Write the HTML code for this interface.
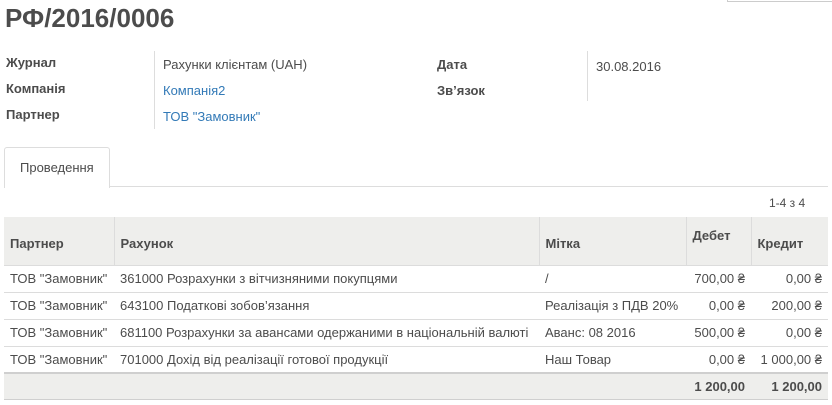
<!DOCTYPE html>
<html><head><meta charset="utf-8"><style>
*{margin:0;padding:0;box-sizing:border-box}
body{width:832px;height:405px;background:#fff;font-family:"Liberation Sans",sans-serif;font-size:13px;color:#4c4c4c;position:relative;overflow:hidden}
.a{position:absolute;white-space:nowrap}
.b{font-weight:bold;color:#4c4c4c}
.l{color:#337ab7}
table{position:absolute;left:4px;top:217px;width:824px;border-collapse:collapse}
td,th{padding:0 6px;white-space:nowrap}
th{background:#eeeeec;height:48px;text-align:left;font-weight:bold;border-left:1px solid #dcdcdc;border-bottom:1px solid #dcdcdc}
th:first-child{border-left:none}
td{height:27px;border-bottom:1px solid #dcdcdc}
.r{text-align:right}
tfoot td{background:#eeeeec;border-top:2px solid #cfcfcf;height:26px;font-weight:bold;border-bottom:1px solid #cfcfcf}
</style></head><body>
<div class="a" style="left:727px;top:-4px;width:106px;height:6px;border:1px solid #ccc"></div>
<div class="a" style="left:5px;top:3px;font-size:26px;font-weight:bold;color:#4c4c4c">РФ/2016/0006</div>
<div class="a b" style="left:6px;top:55px">Журнал</div>
<div class="a b" style="left:6px;top:81px">Компанія</div>
<div class="a b" style="left:6px;top:107px">Партнер</div>
<div class="a" style="left:154px;top:51px;width:1px;height:78px;background:#ddd"></div>
<div class="a" style="left:163px;top:57px">Рахунки клієнтам (UAH)</div>
<div class="a l" style="left:163px;top:83px">Компанія2</div>
<div class="a l" style="left:163px;top:109px">ТОВ "Замовник"</div>
<div class="a b" style="left:437px;top:57px">Дата</div>
<div class="a b" style="left:437px;top:83px">Зв’язок</div>
<div class="a" style="left:587px;top:51px;width:1px;height:50px;background:#ddd"></div>
<div class="a" style="left:596px;top:59px">30.08.2016</div>
<div class="a" style="left:4px;top:147px;width:106px;height:41px;border:1px solid #ddd;border-bottom:none;border-radius:3px 3px 0 0;background:#fff;z-index:2"></div>
<div class="a" style="left:20px;top:160px;z-index:3">Проведення</div>
<div class="a" style="left:4px;top:186px;width:824px;height:1px;background:#ddd"></div>
<div class="a" style="left:769px;top:196px;font-size:12px">1-4 з 4</div>
<table>
<thead><tr><th style="width:110px;padding-top:6px">Партнер</th><th style="width:425px;padding-top:6px">Рахунок</th><th style="width:147px;padding-top:6px">Мітка</th><th style="width:65px;vertical-align:top;padding-top:11px">Дебет</th><th style="padding-top:6px">Кредит</th></tr></thead>
<tbody>
<tr><td>ТОВ "Замовник"</td><td>361000 Розрахунки з вітчизняними покупцями</td><td>/</td><td class="r">700,00 ₴</td><td class="r">0,00 ₴</td></tr>
<tr><td>ТОВ "Замовник"</td><td>643100 Податкові зобов’язання</td><td>Реалізація з ПДВ 20%</td><td class="r">0,00 ₴</td><td class="r">200,00 ₴</td></tr>
<tr><td>ТОВ "Замовник"</td><td>681100 Розрахунки за авансами одержаними в національній валюті</td><td>Аванс: 08 2016</td><td class="r">500,00 ₴</td><td class="r">0,00 ₴</td></tr>
<tr><td>ТОВ "Замовник"</td><td>701000 Дохід від реалізації готової продукції</td><td>Наш Товар</td><td class="r">0,00 ₴</td><td class="r">1 000,00 ₴</td></tr>
</tbody>
<tfoot><tr><td></td><td></td><td></td><td class="r">1 200,00</td><td class="r">1 200,00</td></tr></tfoot>
</table>
</body></html>
